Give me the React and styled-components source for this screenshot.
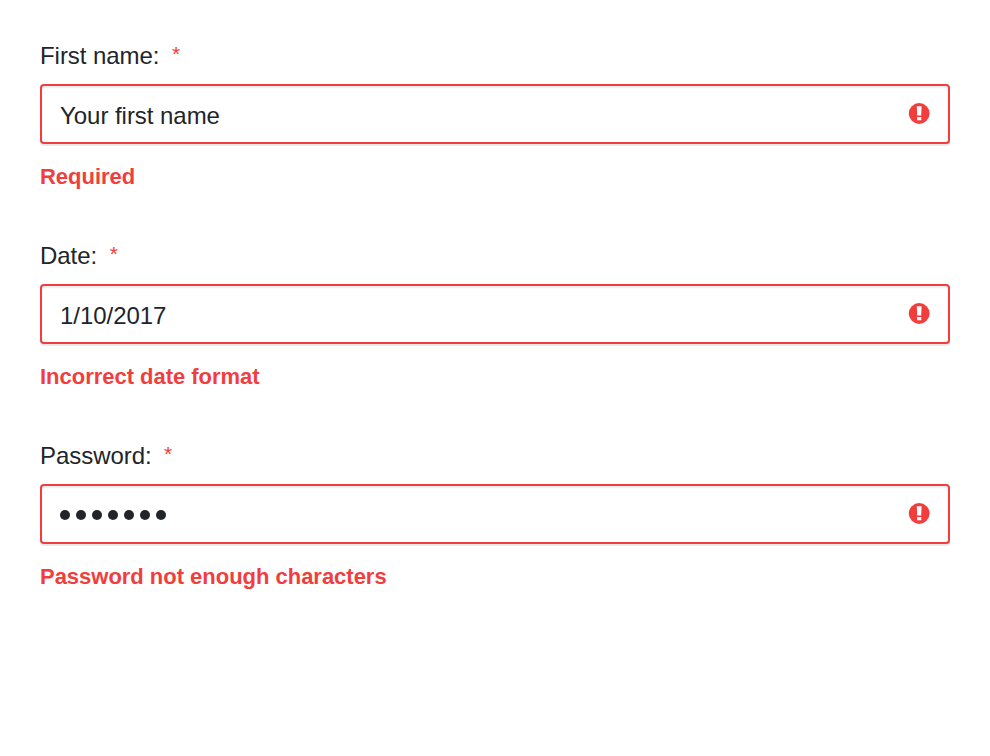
import React from "react";
import styled, { createGlobalStyle } from "styled-components";

const GlobalStyle = createGlobalStyle`
  * { box-sizing: border-box; }
  body { margin: 0; background: #fff; font-family: "Liberation Sans", Arial, sans-serif; color: #212529; }
`;

const Form = styled.form`
  display: flex;
  flex-direction: column;
  padding: 40px 40px 0;
`;

const Field = styled.div`
  display: flex;
  flex-direction: column;
  height: 200px;
`;

const Label = styled.label`
  display: flex;
  height: 44px;
  line-height: 32px;
  font-size: 24px;
  letter-spacing: -0.05px;
`;

const Asterisk = styled.span`
  margin-left: 12.5px;
  font-size: 21px;
  line-height: 27px;
  color: #f23d3d;
`;

const Control = styled.div`
  display: flex;
  align-items: center;
  height: 60px;
  padding: 0 18px;
  border: 2px solid #f23d3d;
  border-radius: 4px;
  background: #fff;
  box-shadow: 0 2px 0 rgba(34, 36, 38, 0.1), inset 0 2px 2px rgba(0, 0, 0, 0.07);
`;

const Value = styled.span`
  flex: 1;
  padding-top: 4px;
  font-size: 24px;
  line-height: 28px;
  letter-spacing: -0.04px;
`;

const Dots = styled.span`
  display: flex;
  flex: 1;
  gap: 6px;
  padding-top: 2px;
`;

const Dot = styled.span`
  width: 10px;
  height: 10px;
  border-radius: 50%;
  background: #212529;
`;

const ErrorIcon = styled.svg`
  display: block;
  width: 22px;
  height: 22px;
`;

const Message = styled.div`
  margin-top: 20px;
  font-size: 22px;
  line-height: 26px;
  font-weight: 700;
  letter-spacing: -0.02px;
  color: #f23d3d;
`;

const fields = [
  { label: "First name:", value: "Your first name", error: "Required" },
  { label: "Date:", value: "1/10/2017", error: "Incorrect date format" },
  { label: "Password:", masked: 7, error: "Password not enough characters" },
];

export default function App() {
  return (
    <>
      <GlobalStyle />
      <Form>
        {fields.map(({ label, value, masked, error }) => (
          <Field key={label}>
            <Label>
              {label}
              <Asterisk>*</Asterisk>
            </Label>
            <Control>
              {masked ? (
                <Dots>
                  {Array.from({ length: masked }, (_, i) => <Dot key={i} />)}
                </Dots>
              ) : (
                <Value>{value}</Value>
              )}
              <ErrorIcon viewBox="0 0 22 22" aria-hidden="true">
                <circle cx="11.2" cy="10.5" r="10.4" fill="#f23d3d" />
                <path d="M8.8 3.2h4.8l-.4 9.4H9.2zM9.1 13.9h4.2v3.4H9.1z" fill="#fff" />
              </ErrorIcon>
            </Control>
            <Message>{error}</Message>
          </Field>
        ))}
      </Form>
    </>
  );
}
